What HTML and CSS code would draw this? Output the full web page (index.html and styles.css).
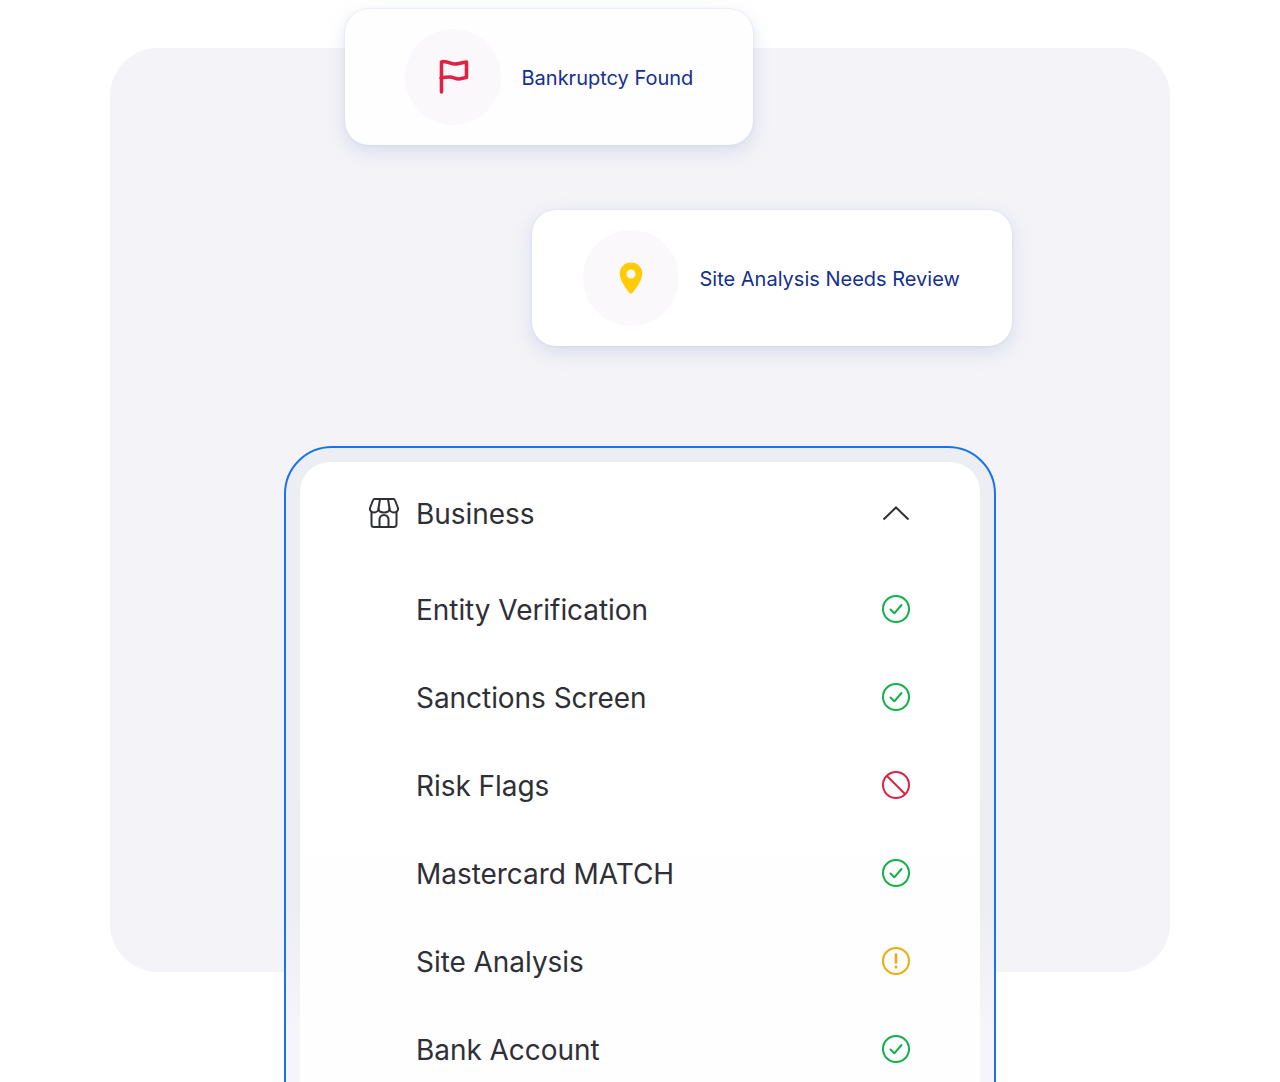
FILE: index.html
```html
<!DOCTYPE html>
<html lang="en">
<head>
<meta charset="utf-8">
<title>Business checks</title>
<link rel="stylesheet" href="styles.css">
</head>
<body>
<main class="stage">
  <div class="panel"></div>

  <div class="toast toast-bankruptcy">
    <span class="toast-badge">
      <svg width="32" height="36" viewBox="0 0 32 36" fill="none" stroke="#dc2343" stroke-width="3.6" stroke-linecap="round" stroke-linejoin="round">
        <path d="M4.500 33V3c3-1 6 0 9 1.200s5.500 1 8.500.3 7.500-1.500 7.500-1.500v15.500c-3 .2-5 1.500-8 1.500s-5-2-9-2-8.500 1-8.500 1"/>
      </svg>
    </span>
    <span class="toast-text">Bankruptcy Found</span>
  </div>

  <div class="toast toast-site">
    <span class="toast-badge">
      <svg width="24" height="32" viewBox="0 0 24 32">
        <path fill="#ffcb05" fill-rule="evenodd" d="M12 .5C5.500.5.700 5.400.700 11.500c0 6.500 6.300 15 9.400 19 1 1.300 2.800 1.300 3.800 0 3.100-4 9.400-12.500 9.400-19C23.300 5.400 18.500.5 12 .5zm0 7a4.500 4.500 0 1 1 0 9 4.500 4.500 0 0 1 0-9z"/>
      </svg>
    </span>
    <span class="toast-text">Site Analysis Needs Review</span>
  </div>

  <section class="frame">
    <div class="sheet">
      <header class="row row-head">
        <span class="row-lead">
          <svg width="32" height="32" viewBox="0 0 32 32" fill="none" stroke="#2f3036" stroke-width="2" stroke-linejoin="round" stroke-linecap="round">
            <path d="M3.500 15v12.500a2.500 2.500 0 0 0 2.500 2.500h20a2.500 2.500 0 0 0 2.500-2.500V15"/>
            <path d="M6.500 2h19a1.500 1.500 0 0 1 1.400 1l3.100 8c.6 2.500-1.500 4.500-4 4.500s-4.500-1.700-4.500-4c0 2.300-2 4-5.500 4s-5.500-1.700-5.500-4c0 2.300-2 4-4.500 4s-4.600-2-4-4.500l3.100-8a1.500 1.500 0 0 1 1.400-1z"/>
            <path d="M12 2l-1.500 9.500M20 2l1.500 9.500"/>
            <path d="M11.500 30v-7.500a4.500 4.500 0 0 1 9 0V30"/>
          </svg>
        </span>
        <span class="row-label">Business</span>
        <svg class="row-status" width="28" height="28" viewBox="0 0 28 28" fill="none" stroke="#2f3036" stroke-width="2">
          <path d="M1.500 20.500 14 8.500l12.500 12"/>
        </svg>
      </header>

      <div class="row">
        <span class="row-label">Entity Verification</span>
        <svg class="row-status" width="28" height="28" viewBox="0 0 28 28" fill="none" stroke="#12b04c" stroke-width="2"><circle cx="14" cy="14" r="13"/><path d="m8.500 14.500 3.800 3.800 7.200-8.300" stroke-linecap="round" stroke-linejoin="round"/></svg>
      </div>
      <div class="row">
        <span class="row-label">Sanctions Screen</span>
        <svg class="row-status" width="28" height="28" viewBox="0 0 28 28" fill="none" stroke="#12b04c" stroke-width="2"><circle cx="14" cy="14" r="13"/><path d="m8.500 14.500 3.800 3.800 7.200-8.300" stroke-linecap="round" stroke-linejoin="round"/></svg>
      </div>
      <div class="row">
        <span class="row-label">Risk Flags</span>
        <svg class="row-status" width="28" height="28" viewBox="0 0 28 28" fill="none" stroke="#dc2343" stroke-width="2"><circle cx="14" cy="14" r="13"/><path d="M5 5l18 18"/></svg>
      </div>
      <div class="row">
        <span class="row-label">Mastercard MATCH</span>
        <svg class="row-status" width="28" height="28" viewBox="0 0 28 28" fill="none" stroke="#12b04c" stroke-width="2"><circle cx="14" cy="14" r="13"/><path d="m8.500 14.500 3.800 3.800 7.200-8.300" stroke-linecap="round" stroke-linejoin="round"/></svg>
      </div>
      <div class="row">
        <span class="row-label">Site Analysis</span>
        <svg class="row-status" width="28" height="28" viewBox="0 0 28 28" fill="none" stroke="#e9ad0c" stroke-width="2"><circle cx="14" cy="14" r="13"/><path d="M14 7.500v8" stroke-width="2.600" stroke-linecap="round"/><circle cx="14" cy="20" r="1.500" fill="#e9ad0c" stroke="none"/></svg>
      </div>
      <div class="row">
        <span class="row-label">Bank Account</span>
        <svg class="row-status" width="28" height="28" viewBox="0 0 28 28" fill="none" stroke="#12b04c" stroke-width="2"><circle cx="14" cy="14" r="13"/><path d="m8.500 14.500 3.800 3.800 7.200-8.300" stroke-linecap="round" stroke-linejoin="round"/></svg>
      </div>
    </div>
  </section>
</main>
</body>
</html>
```
FILE: styles.css
```css
* { box-sizing: border-box; }

html, body {
  margin: 0;
  background: #fff;
}

body {
  font-family: Inter, "Liberation Sans", sans-serif;
  color: #2f3036;
}

.stage {
  position: relative;
  width: 1280px;
  height: 1082px;
  overflow: hidden;
}

.panel {
  position: absolute;
  left: 110px;
  top: 48px;
  width: 1060px;
  height: 924px;
  border-radius: 48px;
  background: #f3f3f8;
}

.toast {
  position: absolute;
  display: flex;
  align-items: center;
  height: 136px;
  border-radius: 24px;
  background: #fefdff;
  box-shadow: 0 6px 16px rgba(190, 198, 225, 0.5), 0 0 2px rgba(190, 198, 225, 0.6);
}

.toast-bankruptcy {
  left: 345px;
  top: 9px;
  width: 408px;
  padding-left: 60px;
  gap: 20.500px;
}

.toast-site {
  left: 532px;
  top: 210px;
  width: 480px;
  padding-left: 51px;
  gap: 20.500px;
  background: #fff;
}

.toast-badge {
  display: flex;
  align-items: center;
  justify-content: center;
  width: 96px;
  height: 96px;
  border-radius: 50%;
  background: #faf8fb;
  flex: none;
}

.toast-text {
  padding-top: 2px;
  font-size: 20px;
  line-height: 28px;
  color: #14308e;
  white-space: nowrap;
}

.frame {
  position: absolute;
  left: 284px;
  top: 446px;
  width: 712px;
  height: 700px;
  padding: 14px;
  border: 2px solid #1a73e8;
  border-radius: 48px;
  background: linear-gradient(#edeef4 0, #edeef4 66%, #f5f5fb 84%);
}

.sheet {
  height: 100%;
  padding: 7px 70px 0 68px;
  border-radius: 30px;
  background: linear-gradient(#fff 50%, #fefdff 85%);
}

.row {
  display: flex;
  align-items: center;
  height: 88px;
  padding-left: 48px;
}

.row-head {
  margin-bottom: 8px;
  padding-left: 0;
}

.row-lead {
  display: flex;
  width: 48px;
  flex: none;
}

.row-label {
  flex: 1;
  padding-top: 2px;
  font-size: 28px;
  line-height: 36px;
  letter-spacing: -0.05px;
  color: #2f3036;
}

.row-status {
  flex: none;
}
```
